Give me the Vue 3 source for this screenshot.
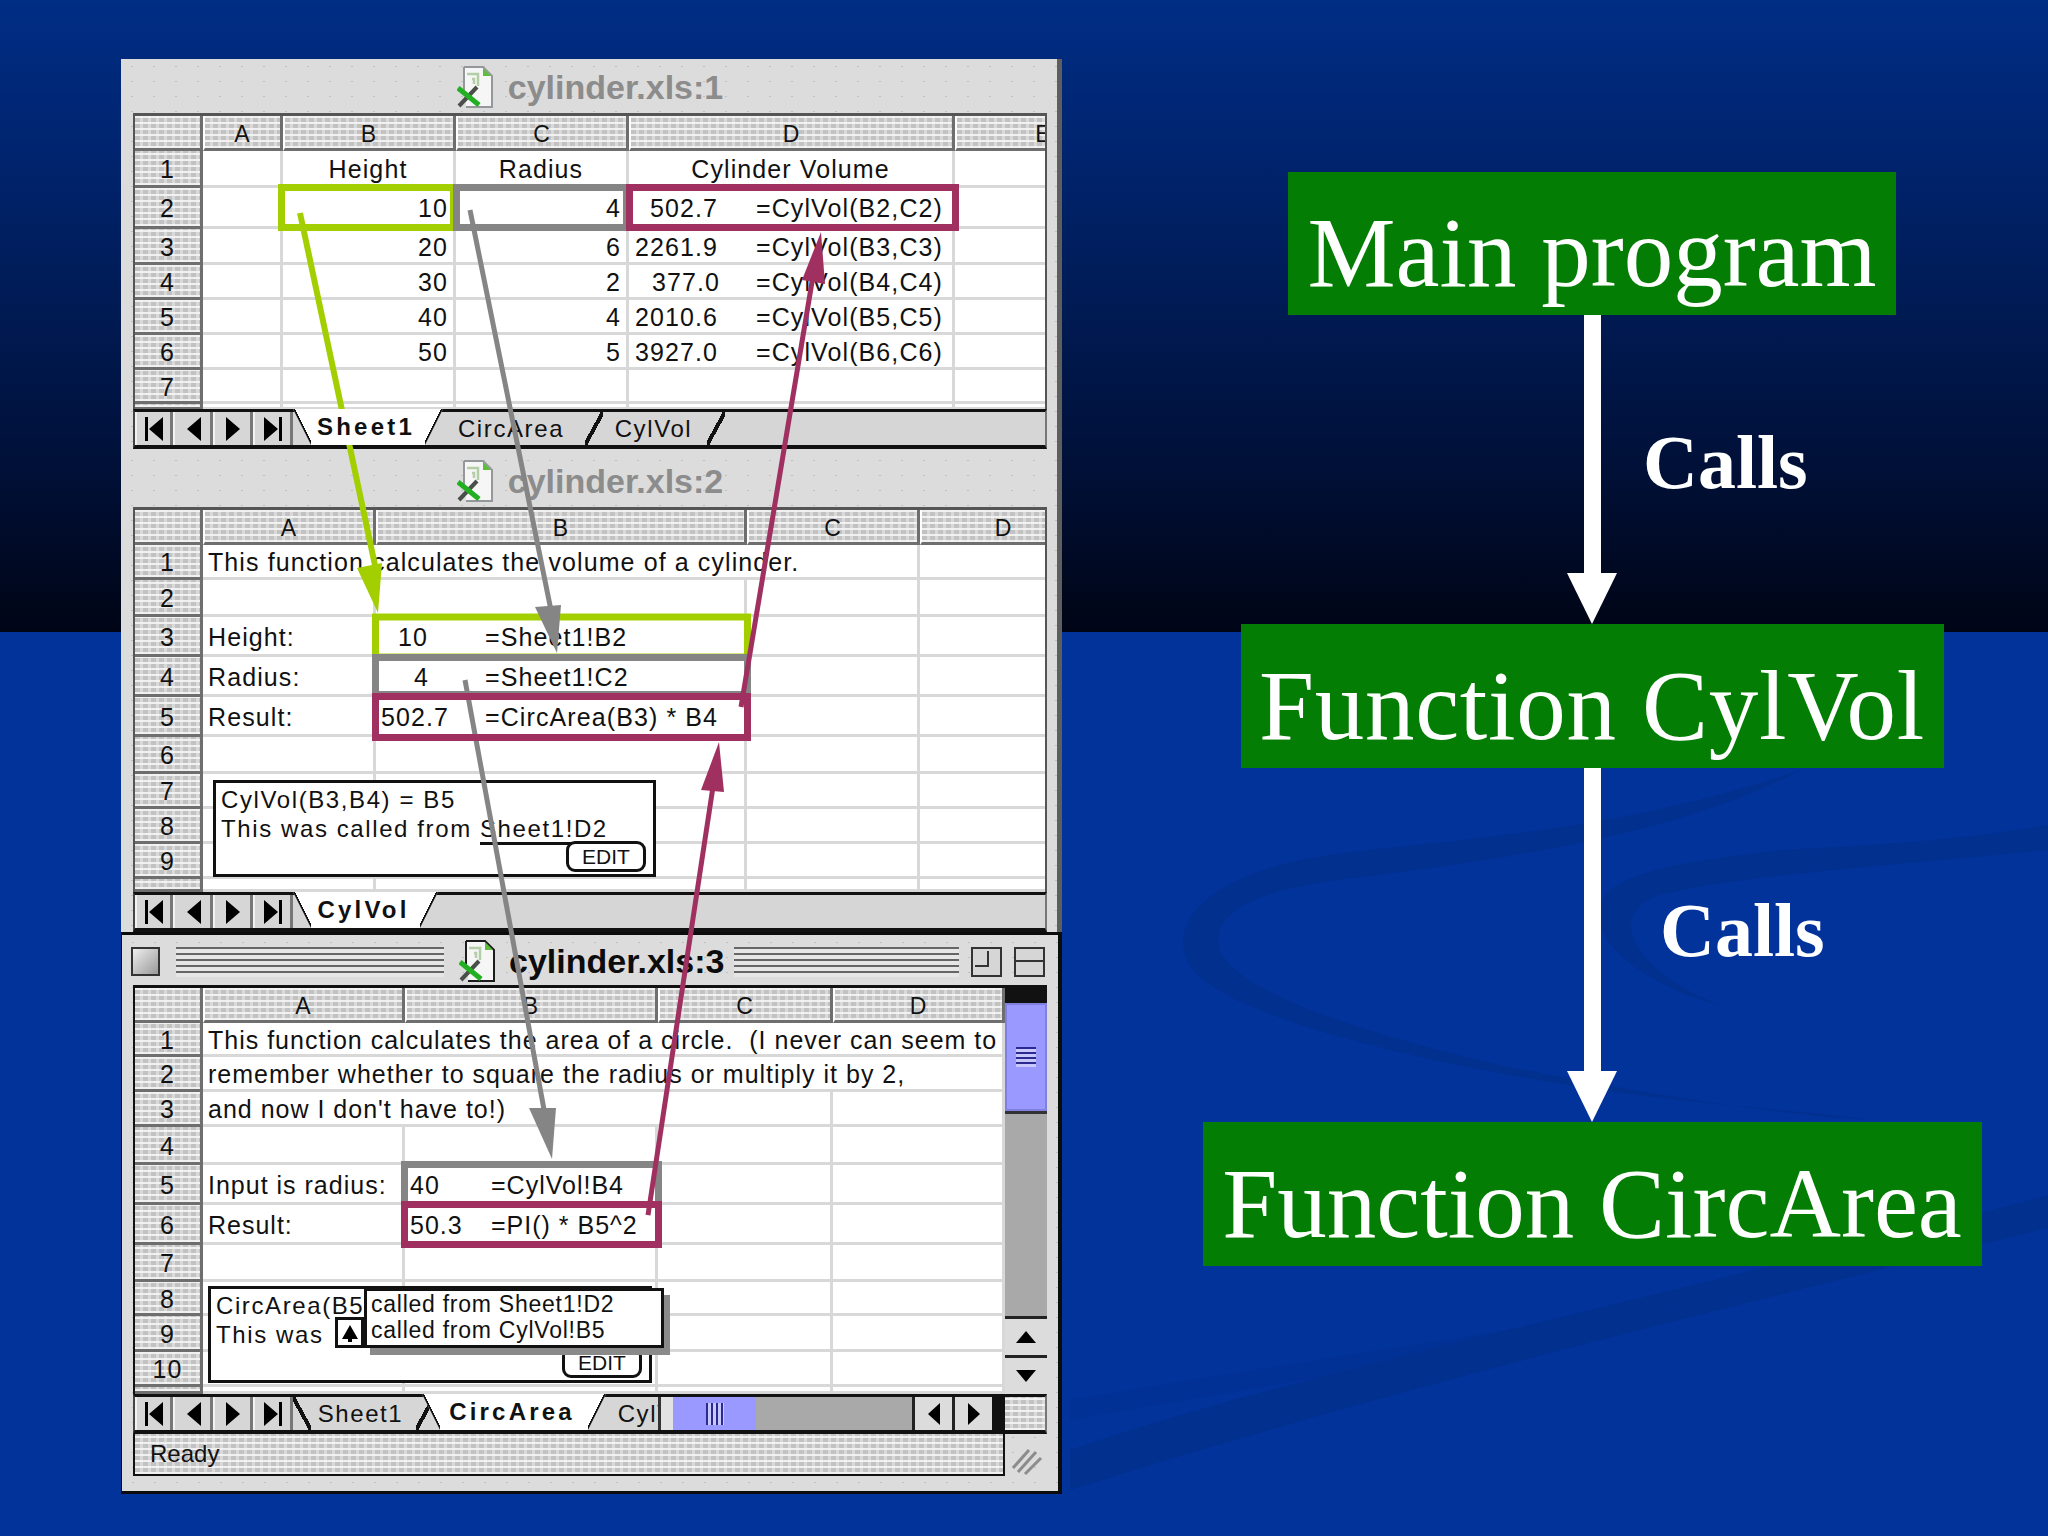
<template>
  <div class="slide">
    <!-- background swooshes -->
    <svg class="swoosh" width="2048" height="1536" viewBox="0 0 2048 1536">
      <path d="M1800 770C1600 840 1400 840 1300 860C1210 880 1170 920 1187 960C1205 1010 1400 1060 1600 1090C1700 1105 1800 1110 1870 1120C1780 1115 1650 1095 1500 1065C1350 1030 1235 990 1220 950C1210 910 1260 890 1340 880C1500 860 1680 835 1800 770Z" />
      <path d="M2048 825V850C1900 865 1740 875 1660 895C1600 915 1640 975 1720 1005C1660 990 1590 950 1600 905C1610 870 1700 860 1780 850C1880 845 1960 840 2048 825Z" />
      <path d="M2048 1195V1228C1800 1290 1400 1385 1070 1490V1450C1300 1370 1700 1290 2048 1195Z" />
      <path d="M1780 1290C1500 1330 1250 1370 1070 1400V1420C1300 1380 1550 1340 1780 1290Z" opacity=".5" />
    </svg>

    <!-- excel windows -->
    <div class="windows">
      <div v-for="win in windows" :key="win.title" class="win" :class="{ active: win.active }">
        <div class="titlebar" :style="{ height: win.titleH + 'px' }">
          <template v-if="win.active">
            <span class="closebox"></span>
            <span class="stripes stripes-l"></span>
          </template>
          <svg class="doc" width="38" height="44" viewBox="0 0 38 44">
            <path d="M7 1H26L35 10V41H9" fill="#f6f6f6" stroke="currentColor" stroke-width="2" />
            <path d="M7 1V24" fill="none" stroke="currentColor" stroke-width="2" />
            <path d="M26 2V10H34Z" fill="#5cbf3c" />
            <path d="M10 8H21V20M15 13H17V18" stroke="#b4cfa8" stroke-width="2.500" fill="none" />
            <path d="M2 40L20 21" stroke="#4a4f4a" stroke-width="4" />
            <path d="M1 22L22 39" stroke="#22b022" stroke-width="5" />
          </svg>
          <span class="title">{{ win.title }}</span>
          <template v-if="win.active">
            <span class="stripes stripes-r"></span>
            <span class="winbtn zoom"></span>
            <span class="winbtn shade"></span>
          </template>
        </div>

        <div class="body">
          <div
            class="sheet"
            :style="{
              gridTemplateColumns: [68, ...win.cols].map((w) => w + 'px').join(' '),
              gridTemplateRows: [35, ...win.rows.map((r) => r.h)].map((h) => h + 'px').join(' '),
            }"
          >
            <div class="corner tex"></div>
            <div v-for="(w, i) in win.cols" :key="i" class="colhead tex">{{ 'ABCDE'[i] }}</div>

            <template v-for="(row, r) in win.rows" :key="r">
              <div class="rowhead tex">{{ row.label }}</div>
              <div
                v-for="(c, k) in row.cells"
                :key="k"
                class="cell"
                :class="c.align"
                :style="{ gridColumn: 'span ' + (c.span || 1) }"
              >
                <template v-if="c.fml">
                  <span class="val" :style="{ width: c.gap + 'px', paddingLeft: c.pad + 'px' }">{{ c.val }}</span>
                  <span>{{ c.fml }}</span>
                </template>
                <template v-else>{{ c.t }}</template>
              </div>
            </template>

            <!-- cell notes floating over the grid -->
            <div v-if="win.note === 'cyl'" class="note note-cyl">
              <div>CylVol(B3,B4) = B5</div>
              <div>This was called from <span class="link">Sheet1!D2</span></div>
              <span class="edit">EDIT</span>
            </div>
            <template v-if="win.note === 'circ'">
              <div class="note note-circ">
                <div>CircArea(B5)</div>
                <div>This was</div>
                <span class="edit">EDIT</span>
              </div>
              <div class="popup-up">
                <svg width="20" height="20" viewBox="0 0 20 20"><path d="M10 2L18 16H12V19H8V16H2Z" /></svg>
              </div>
              <div class="popup">
                <div>called from Sheet1!D2</div>
                <div>called from CylVol!B5</div>
              </div>
            </template>
          </div>

          <div v-if="win.active" class="vscroll">
            <div class="vcap"></div>
            <div class="vthumb"><span class="grip-h"></span></div>
            <div class="vtrack"></div>
            <div class="vbtn"><svg width="20" height="14" viewBox="0 0 20 14"><path d="M10 1L20 13H0Z" /></svg></div>
            <div class="vbtn"><svg width="20" height="14" viewBox="0 0 20 14"><path d="M0 1H20L10 13Z" /></svg></div>
          </div>
        </div>

        <div class="tabstrip">
          <div v-for="(nav, n) in navButtons" :key="n" class="nav">
            <svg width="24" height="28" viewBox="0 0 24 28"><path :d="nav" /></svg>
          </div>
          <div class="tabs" :class="{ clipped: win.active }">
            <div
              v-for="(tab, t) in win.tabs"
              :key="tab.name"
              class="tab"
              :class="{ on: tab.on, first: t === 0 }"
              :style="{ width: tab.w + 'px', marginLeft: tab.ml + 'px' }"
            >{{ tab.name }}</div>
          </div>
          <template v-if="win.active">
            <div class="hgap"></div>
            <div class="hthumb"><span class="grip-v"></span></div>
            <div class="htrack"></div>
            <div class="hbtn"><svg width="14" height="22" viewBox="0 0 14 22"><path d="M13 0V22L1 11Z" /></svg></div>
            <div class="hbtn"><svg width="14" height="22" viewBox="0 0 14 22"><path d="M1 0V22L13 11Z" /></svg></div>
            <div class="hend"></div>
            <div class="hcorner tex"></div>
          </template>
        </div>

        <div v-if="win.active" class="statusrow">
          <div class="status tex">Ready</div>
          <svg class="grow" width="42" height="42" viewBox="0 0 42 42">
            <path d="M8 34L24 16M13 38L31 18M20 40L36 24" stroke="#8c8c8c" stroke-width="3" />
          </svg>
        </div>
      </div>
    </div>

    <!-- call flow on the right -->
    <div class="flow">
      <div class="box box-main">Main program</div>
      <div class="connector con-1">
        <span></span>
        <div class="arrow"><div class="shaft"></div><div class="head"></div></div>
        <div class="calls">Calls</div>
      </div>
      <div class="box box-cyl">Function CylVol</div>
      <div class="connector con-2">
        <span></span>
        <div class="arrow"><div class="shaft"></div><div class="head"></div></div>
        <div class="calls">Calls</div>
      </div>
      <div class="box box-circ">Function CircArea</div>
    </div>

    <!-- coloured cell outlines and arrows drawn over the windows -->
    <svg class="marks" width="2048" height="1536" viewBox="0 0 2048 1536" fill="none" stroke-width="7">
      <g stroke="#a3cf00">
        <rect x="281.500" y="187.500" width="172" height="40" />
        <rect x="375.500" y="617" width="372" height="40" />
        <path d="M300 213L376 570" stroke-width="6" />
        <path d="M357 568L382 563L378 613Z" fill="#a3cf00" stroke="none" />
      </g>
      <g stroke="#858585">
        <rect x="456.500" y="187.500" width="170" height="40" />
        <rect x="375.500" y="657.500" width="372" height="37" />
        <rect x="404.500" y="1164.500" width="254" height="40" />
        <path d="M470 210L557 640" stroke-width="5" />
        <path d="M535 607L561 605L557 653Z" fill="#858585" stroke="none" />
        <path d="M465 680L545 1115" stroke-width="5" />
        <path d="M529 1108L556 1108L552 1159Z" fill="#858585" stroke="none" />
      </g>
      <g stroke="#a03060">
        <rect x="629.500" y="187.500" width="326" height="40" />
        <rect x="375.500" y="696.500" width="372" height="41" />
        <rect x="404.500" y="1204.500" width="254" height="40" />
        <path d="M648 1215L714 780" stroke-width="5" />
        <path d="M701 790L724 792L719 742Z" fill="#a03060" stroke="none" />
        <path d="M741 707L814 270" stroke-width="5" />
        <path d="M802 280L825 284L821 232Z" fill="#a03060" stroke="none" />
      </g>
    </svg>
  </div>
</template>

<script setup>
// one row: label, height and its cells
const row = (label, h, ...cells) => ({ label, h, cells })
const blank = (n) => Array.from({ length: n }, () => ({}))

const navButtons = [
  'M3 2H6V26H3ZM21 2V26L7 14Z',
  'M20 2V26L6 14Z',
  'M5 2V26L19 14Z',
  'M3 2V26L17 14ZM18 2H21V26H18Z',
]

// helpers for the value + formula cells
const sheet1 = (label, h, a, b, val, pad, fml) =>
  row(label, h, {}, { t: a, align: 'right' }, { t: b, align: 'right' }, { val, pad, gap: 127, fml }, {})
const calc = (label, h, text, val, pad, fml, gap) =>
  row(label, h, { t: text }, { val, pad, gap, fml }, {}, {})

const windows = [
  {
    title: 'cylinder.xls:1',
    titleH: 57,
    cols: [80, 173, 173, 326, 178],
    rows: [
      row('1', 37, {}, { t: 'Height', align: 'center' }, { t: 'Radius', align: 'center' }, { t: 'Cylinder Volume', align: 'center' }, {}),
      sheet1('2', 41, '10', '4', '502.7', 21, '=CylVol(B2,C2)'),
      sheet1('3', 36, '20', '6', '2261.9', 6, '=CylVol(B3,C3)'),
      sheet1('4', 35, '30', '2', '377.0', 23, '=CylVol(B4,C4)'),
      sheet1('5', 35, '40', '4', '2010.6', 6, '=CylVol(B5,C5)'),
      sheet1('6', 35, '50', '5', '3927.0', 6, '=CylVol(B6,C6)'),
      row('7', 34, ...blank(5)),
      row('', 5, ...blank(5)),
    ],
    tabs: [
      { name: 'Sheet1', on: true, w: 150, ml: 0 },
      { name: 'CircArea', w: 178, ml: -18 },
      { name: 'CylVol', w: 137, ml: -15 },
    ],
  },
  {
    title: 'cylinder.xls:2',
    titleH: 57,
    cols: [173, 371, 173, 168],
    rows: [
      row('1', 35, { t: 'This function calculates the volume of a cylinder.', span: 3 }, {}),
      row('2', 37, ...blank(4)),
      calc('3', 40, 'Height:', '10', 22, '=Sheet1!B2', 109),
      calc('4', 40, 'Radius:', '4', 38, '=Sheet1!C2', 109),
      calc('5', 40, 'Result:', '502.7', 5, '=CircArea(B3) * B4', 109),
      row('6', 37, ...blank(4)),
      row('7', 35, ...blank(4)),
      row('8', 35, ...blank(4)),
      row('9', 35, ...blank(4)),
      row('', 13, ...blank(4)),
    ],
    note: 'cyl',
    tabs: [{ name: 'CylVol', on: true, w: 145, ml: 0 }],
  },
  {
    title: 'cylinder.xls:3',
    titleH: 53,
    active: true,
    cols: [202, 253, 175, 172],
    rows: [
      row('1', 34, { t: 'This function calculates the area of a circle.  (I never can seem to', span: 4 }),
      row('2', 35, { t: 'remember whether to square the radius or multiply it by 2,', span: 4 }),
      row('3', 35, { t: "and now I don't have to!)", span: 3 }, {}),
      row('4', 38, ...blank(4)),
      calc('5', 40, 'Input is radius:', '40', 5, '=CylVol!B4', 86),
      calc('6', 40, 'Result:', '50.3', 5, '=PI() * B5^2', 86),
      row('7', 37, ...blank(4)),
      row('8', 34, ...blank(4)),
      row('9', 36, ...blank(4)),
      row('10', 35, ...blank(4)),
      row('', 7, ...blank(4)),
    ],
    note: 'circ',
    tabs: [
      { name: 'Sheet1', w: 141, ml: 0 },
      { name: 'CircArea', on: true, w: 184, ml: -12 },
      { name: 'CylVol', w: 137, ml: -15 },
    ],
  },
]
</script>

<style scoped>
.slide {
  position: relative;
  width: 2048px;
  height: 1536px;
  overflow: hidden;
  display: flex;
  align-items: flex-start;
  background:
    linear-gradient(180deg, #002d85 0, #00246f 150px, #001b55 300px, #000f35 480px, #00071c 600px, #000516 632px, transparent 632px),
    #02339b;
  font-family: "Liberation Sans", Arial, sans-serif;
}
.swoosh,
.marks {
  position: absolute;
  left: 0;
  top: 0;
}
.swoosh path {
  fill: #02308f;
}
.marks {
  pointer-events: none;
}

/* windows */
.windows {
  position: relative;
  display: flex;
  flex-direction: column;
  width: 941px;
  margin: 59px 0 0 121px;
}
.win {
  width: 941px;
  box-sizing: border-box;
  padding: 0 10px 4px 12px;
  background-color: #dcdcdc;
  background-image: radial-gradient(#c0c0c0 1px, transparent 1.5px);
  background-size: 22px 15px;
  border-right: 5px solid #5e5e5e;
  color: #111;
}
.win:nth-child(2) {
  padding-bottom: 0;
}
.win.active {
  padding: 0 11px 15px 11px;
  border: 3px solid #0c0c0c;
  border-left-width: 1px;
  border-right-width: 4px;
}
.titlebar {
  display: flex;
  align-items: center;
  justify-content: center;
  gap: 13px;
}
.doc {
  flex: none;
  color: #94989a;
}
.active .doc {
  color: #1c1c1c;
}
.title {
  font-size: 34px;
  font-weight: 700;
  color: #8c8c8c;
  white-space: nowrap;
}
.active .title {
  color: #0c0c0c;
}
.active .titlebar {
  justify-content: flex-start;
  gap: 0;
}
.closebox {
  flex: none;
  width: 29px;
  height: 29px;
  margin-left: -2px;
  box-sizing: border-box;
  border: 2px solid #333;
  background: linear-gradient(135deg, #eee, #999);
}
.stripes {
  flex: none;
  height: 30px;
  background: repeating-linear-gradient(180deg, #666 0 2px, #e6e6e6 2px 6px);
}
.stripes-l {
  width: 268px;
  margin: 0 15px 0 16px;
}
.stripes-r {
  width: 225px;
  margin-left: 10px;
}
.active .title {
  margin-left: 12px;
}
.winbtn {
  flex: none;
  width: 31px;
  height: 30px;
  margin-left: 12px;
  box-sizing: border-box;
  border: 2px solid #333;
  background: #d6d6d6;
  position: relative;
}
.zoom::after {
  content: "";
  position: absolute;
  left: 2px;
  top: 2px;
  width: 12px;
  height: 14px;
  border-right: 2px solid #333;
  border-bottom: 2px solid #333;
}
.shade::after {
  content: "";
  position: absolute;
  left: 0;
  right: 0;
  top: 11px;
  height: 2px;
  background: #333;
}

/* sheet */
.body {
  display: flex;
}
.sheet {
  position: relative;
  flex: 1;
  min-width: 0;
  display: grid;
  overflow: hidden;
  background: #fff;
  border-top: 3px solid #555;
  border-left: 2px solid #555;
  border-right: 2px solid #555;
  margin-top: -3px;
  font-size: 25px;
  letter-spacing: 1.1px;
}
.active .sheet {
  border-top-color: #111;
  border-left-color: #111;
  border-right: 0;
  letter-spacing: 1px;
}
.tex {
  background-color: #d9d9d9;
  background-image:
    repeating-linear-gradient(0deg, rgba(245, 245, 245, 0.9) 0 2px, transparent 2px 6px),
    repeating-linear-gradient(90deg, #c2c2c2 0 5px, transparent 5px 8px);
}
.corner,
.colhead,
.rowhead {
  display: flex;
  align-items: center;
  justify-content: center;
  box-sizing: border-box;
  padding-top: 3px;
  border-bottom: 3px solid #6e6e6e;
  border-right: 3px solid #6e6e6e;
  line-height: 1;
  font-size: 25px;
}
.colhead {
  border-left: 2px solid #fff;
  padding-top: 5px;
  font-size: 23px;
}
.rowhead {
  overflow: hidden;
}
.cell {
  display: flex;
  align-items: center;
  box-sizing: border-box;
  min-width: 0;
  padding: 3px 5px 0;
  border-right: 3px solid #d8d8d8;
  border-bottom: 3px solid #d8d8d8;
  white-space: pre;
  line-height: 1;
  overflow: visible;
}
.cell.right {
  justify-content: flex-end;
  padding-right: 5px;
}
.cell.center {
  justify-content: center;
}
.cell:has(.val) {
  padding: 3px 0 0;
}
.val {
  flex: none;
  box-sizing: border-box;
}

/* floating notes */
.note {
  position: absolute;
  box-sizing: border-box;
  background: #fff;
  border: 3px solid #111;
  font-size: 24px;
  line-height: 29px;
  letter-spacing: 1.6px;
  padding-left: 5px;
}
.note-cyl {
  left: 78px;
  top: 270px;
  width: 443px;
  height: 97px;
  padding-top: 2px;
}
.note-circ {
  left: 73px;
  top: 298px;
  width: 444px;
  height: 97px;
  padding-top: 2px;
}
.link {
  border-bottom: 3px solid #111;
  padding-right: 4px;
}
.edit {
  position: absolute;
  right: 7px;
  bottom: 2px;
  width: 80px;
  height: 31px;
  box-sizing: border-box;
  border: 3px solid #111;
  border-radius: 9px;
  background: #fff;
  text-align: center;
  font-size: 21px;
  line-height: 25px;
  letter-spacing: 0;
}
.popup-up {
  position: absolute;
  left: 200px;
  top: 329px;
  width: 29px;
  height: 31px;
  box-sizing: border-box;
  border: 3px solid #111;
  background: #fff;
  display: flex;
  align-items: center;
  justify-content: center;
}
.popup {
  position: absolute;
  left: 229px;
  top: 300px;
  width: 300px;
  height: 60px;
  box-sizing: border-box;
  border: 3px solid #111;
  background: #fff;
  box-shadow: 6px 7px 0 #8a8a8a;
  padding-left: 4px;
  font-size: 23px;
  line-height: 26px;
  letter-spacing: 0.75px;
}

/* vertical scrollbar */
.vscroll {
  width: 42px;
  display: flex;
  flex-direction: column;
  margin-top: -3px;
  box-sizing: border-box;
}
.vcap {
  height: 18px;
  background: #111;
}
.vthumb {
  height: 108px;
  background: #9999ff;
  border: 2px solid #8080e0;
  box-sizing: border-box;
  display: flex;
  align-items: center;
  justify-content: center;
}
.grip-h {
  width: 20px;
  height: 20px;
  background: repeating-linear-gradient(180deg, #2a2a90 0 2px, #c8c8ff 2px 5px);
}
.vtrack {
  flex: 1;
  background: #a9a9a9;
  border-top: 3px solid #333;
}
.vbtn {
  height: 39px;
  box-sizing: border-box;
  background: #dcdcdc;
  border-top: 3px solid #222;
  display: flex;
  align-items: center;
  justify-content: center;
}

/* tab strip */
.tabstrip {
  display: flex;
  height: 40px;
  box-sizing: border-box;
  background: #d6d6d6;
  border-top: 3px solid #111;
  border-bottom: 4px solid #111;
  border-left: 2px solid #444;
  border-right: 2px solid #777;
}
.nav {
  flex: none;
  width: 40px;
  box-sizing: border-box;
  border-right: 3px solid #777;
  border-left: 2px solid #f2f2f2;
  display: flex;
  align-items: center;
  justify-content: center;
}
.nav:first-child {
  width: 38px;
}
.tabs {
  display: flex;
  flex: 1;
  min-width: 0;
}
.tabs.clipped {
  flex: none;
  width: 365px;
  overflow: hidden;
  margin-top: -3px;
  padding-top: 3px;
}
.tab {
  --line: #111;
  position: relative;
  flex: none;
  box-sizing: border-box;
  display: flex;
  align-items: center;
  justify-content: center;
  padding-right: 6px;
  font-size: 24px;
  letter-spacing: 1.6px;
  white-space: nowrap;
}
.tab::after,
.tab.first::before,
.tab.on::before {
  content: "";
  position: absolute;
  top: 0;
  bottom: 0;
  width: 18px;
}
/* right edge slants like / */
.tab::after {
  right: 0;
  background: linear-gradient(to bottom right, transparent calc(50% - 2px), var(--line) calc(50% - 2px), var(--line) calc(50% + 2px), transparent calc(50% + 2px));
}
/* left edge slants like \ */
.tab.first::before,
.tab.on::before {
  left: 0;
  background: linear-gradient(to bottom left, transparent calc(50% - 2px), var(--line) calc(50% - 2px), var(--line) calc(50% + 2px), transparent calc(50% + 2px));
}
.tab.on {
  z-index: 1;
  margin-top: -3px;
  padding-right: 4px;
  font-weight: 700;
  letter-spacing: 3.2px;
  background: #fff;
  clip-path: polygon(0 0, 100% 0, calc(100% - 18px) 100%, 18px 100%);
}
.hgap {
  flex: none;
  width: 15px;
  background: #e2e2e2;
  border-left: 3px solid #333;
  box-sizing: border-box;
}
.hthumb {
  flex: none;
  width: 83px;
  background: #9999ff;
  display: flex;
  align-items: center;
  justify-content: center;
}
.grip-v {
  width: 18px;
  height: 22px;
  background: repeating-linear-gradient(90deg, #2a2a90 0 2px, #c8c8ff 2px 5px);
}
.htrack {
  flex: none;
  width: 156px;
  background: #a9a9a9;
}
.hbtn {
  flex: none;
  width: 40px;
  box-sizing: border-box;
  background: #dcdcdc;
  border-left: 3px solid #222;
  display: flex;
  align-items: center;
  justify-content: center;
}
.hend {
  flex: none;
  width: 13px;
  background: #111;
}
.hcorner {
  flex: none;
  width: 40px;
}
.statusrow {
  display: flex;
  height: 42px;
}
.status {
  flex: 1;
  display: flex;
  align-items: center;
  padding-left: 15px;
  border: 2px solid #111;
  border-top: 0;
  font-size: 24px;
}
.grow {
  flex: none;
}

/* call flow */
.flow {
  position: relative;
  flex: 1;
  box-sizing: border-box;
  display: flex;
  flex-direction: column;
  align-items: center;
  padding: 172px 0 0 74px;
  min-width: 0;
}
.box {
  flex: none;
  height: 144px;
  box-sizing: border-box;
  padding-top: 18px;
  display: flex;
  align-items: center;
  justify-content: center;
  background: #037d03;
  color: #fff;
  font-family: "Liberation Serif", "Times New Roman", serif;
  font-size: 99px;
  white-space: nowrap;
}
.box-main {
  width: 608px;
  height: 143px;
}
.box-cyl {
  width: 703px;
  letter-spacing: 0.7px;
}
.box-circ {
  width: 779px;
}
.connector {
  flex: none;
  width: 100%;
  display: grid;
  grid-template-columns: 1fr 50px 1fr;
}
.con-1 {
  height: 309px;
}
.con-2 {
  height: 354px;
}
.arrow {
  display: flex;
  flex-direction: column;
  align-items: center;
}
.shaft {
  flex: 1;
  width: 17px;
  background: #fff;
}
.head {
  width: 0;
  height: 0;
  border-left: 25px solid transparent;
  border-right: 25px solid transparent;
  border-top: 51px solid #fff;
}
.calls {
  align-self: center;
  color: #fff;
  font-family: "Liberation Serif", "Times New Roman", serif;
  font-size: 76px;
  font-weight: 700;
  line-height: 1;
}
.con-1 .calls {
  padding: 0 0 15px 26px;
}
.con-2 .calls {
  padding: 0 0 30px 43px;
}
</style>

<style>
html,
body {
  margin: 0;
  background: #02339b;
}
</style>
